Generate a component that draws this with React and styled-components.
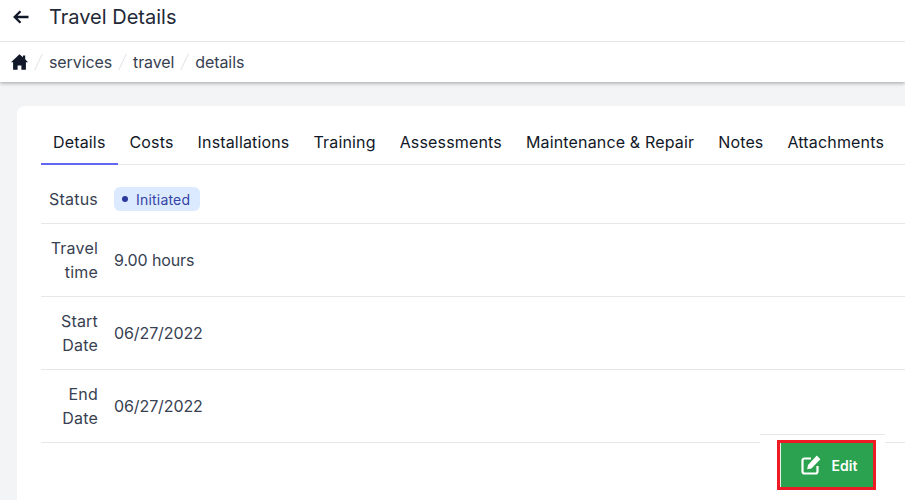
import React from "react";
import styled, { createGlobalStyle } from "styled-components";

const tabs = ["Details", "Costs", "Installations", "Training", "Assessments", "Maintenance & Repair", "Notes", "Attachments"];

const rows = [
  { label: "Travel time", value: "9.00 hours" },
  { label: "Start Date", value: "06/27/2022" },
  { label: "End Date", value: "06/27/2022" },
];

const App = () => (
  <Page>
    <GlobalStyle />
    <TopBar>
      <Header>
        <BackButton>
          <svg width="16" height="14" viewBox="0 0 16 14" fill="none" stroke="#111827" strokeWidth="2.3">
            <path d="M7.5 1.2 L1.7 7 L7.5 12.8 M1.7 7 H15.5" />
          </svg>
        </BackButton>
        <Title>Travel Details</Title>
      </Header>
      <Breadcrumbs>
        <svg width="17" height="16" viewBox="0 0 17 16" fill="#111827">
          <path d="M8.5 0.2 L12 3.3 L12 1.6 L14.2 1.6 L14.2 5.3 L17 8.2 L14.9 8.2 L14.9 15.8 L10.4 15.8 L10.4 11.4 L6.6 11.4 L6.6 15.8 L2.1 15.8 L2.1 8.2 L0 8.2 Z" />
        </svg>
        {["services", "travel", "details"].map((crumb) => (
          <React.Fragment key={crumb}>
            <Slash />
            <Crumb>{crumb}</Crumb>
          </React.Fragment>
        ))}
      </Breadcrumbs>
    </TopBar>
    <Content>
      <Card>
        <TabList>
          {tabs.map((tab, i) => (
            <Tab key={tab} $active={i === 0}>
              {tab}
            </Tab>
          ))}
        </TabList>
        <Row $status>
          <Label>Status</Label>
          <Badge>
            <Dot />
            Initiated
          </Badge>
        </Row>
        {rows.map((row) => (
          <Row key={row.label}>
            <Label>{row.label}</Label>
            <Value>{row.value}</Value>
          </Row>
        ))}
      </Card>
    </Content>
    <EditPanel>
      <EditButton>
        <svg width="20" height="20" viewBox="0 0 20 20" fill="none">
          <path d="M10 3.5 H3.5 A2 2 0 0 0 1.5 5.5 V16.5 A2 2 0 0 0 3.5 18.5 H14.5 A2 2 0 0 0 16.5 16.5 V11" stroke="#fff" strokeWidth="2.2" />
          <path d="M15.8 0.6 L19.4 4.2 L10.4 13.4 L6.2 14.2 L7 10 Z" fill="#fff" />
        </svg>
        Edit
      </EditButton>
    </EditPanel>
  </Page>
);

const GlobalStyle = createGlobalStyle`
  html, body {
    margin: 0;
    height: 100%;
    overflow: hidden;
    background: #f3f4f6;
    font-family: Inter, "Liberation Sans", sans-serif;
    color: #1f2937;
  }
`;

const Page = styled.div`
  position: relative;
  width: 905px;
  height: 500px;
  overflow: hidden;
`;

const TopBar = styled.div`
  background: #fff;
  box-shadow: 0 1px 4px rgba(0, 0, 0, 0.35);
`;

const Header = styled.div`
  display: flex;
  align-items: center;
  padding: 0 0 7px 13px;
  box-sizing: border-box;
  height: 42px;
  border-bottom: 1px solid #e5e7eb;
`;

const BackButton = styled.div`
  display: flex;
  width: 36px;
`;

const Title = styled.h1`
  margin: 0;
  font-size: 20px;
  font-weight: 400;
  color: #1f2937;
`;

const Breadcrumbs = styled.div`
  display: flex;
  align-items: center;
  height: 40px;
  padding-left: 11px;
`;

const Slash = styled.span`
  width: 1px;
  height: 18px;
  margin: 0 10px;
  background: #dfe2e7;
  transform: rotate(25deg);
`;

const Crumb = styled.span`
  font-size: 16px;
  letter-spacing: -0.1px;
  color: #374151;
`;

const Content = styled.div`
  padding: 24px 0 0 17px;
`;

const Card = styled.div`
  width: 920px;
  height: 420px;
  padding-left: 24px;
  background: #fff;
  border-radius: 8px;
  box-sizing: border-box;
`;

const TabList = styled.div`
  display: flex;
  height: 58px;
  align-items: flex-end;
  border-bottom: 1px solid #e5e7eb;
`;

const Tab = styled.div`
  padding: 0 12px 10px;
  margin-bottom: -1px;
  line-height: 22px;
  font-size: 16px;
  letter-spacing: 0.16px;
  color: #111827;
  white-space: nowrap;
  border-bottom: 2px solid ${({ $active }) => ($active ? "#6366f1" : "transparent")};
`;

const Row = styled.div`
  display: flex;
  align-items: center;
  gap: 16px;
  height: ${({ $status }) => ($status ? "48px" : "72px")};
  padding-top: ${({ $status }) => ($status ? "10px" : "0")};
  border-bottom: 1px solid #e5e7eb;
`;

const Label = styled.div`
  width: 49px;
  margin-left: 8px;
  text-align: right;
  font-size: 16px;
  line-height: 24px;
  letter-spacing: 0.2px;
  color: #374151;
`;

const Value = styled.div`
  font-size: 16px;
  letter-spacing: -0.1px;
  color: #374151;
`;

const Badge = styled.span`
  display: inline-flex;
  align-items: center;
  gap: 8px;
  height: 24px;
  padding: 0 10px 0 8px;
  border-radius: 6px;
  background: #dbeafe;
  font-size: 14px;
  letter-spacing: 0.2px;
  color: #3342a5;
`;

const Dot = styled.span`
  width: 6px;
  height: 6px;
  border-radius: 50%;
  background: #2b3a9f;
`;

const EditPanel = styled.div`
  position: absolute;
  left: 760px;
  top: 434px;
  width: 125px;
  height: 66px;
  box-sizing: border-box;
  background: #fff;
  border-top: 1px solid #e5e7eb;
  padding: 5px 0 0 17px;
`;

const EditButton = styled.button`
  display: flex;
  align-items: center;
  justify-content: center;
  gap: 11px;
  width: 99px;
  height: 50px;
  box-sizing: border-box;
  padding: 0 0 0 5px;
  border: 3px solid #ed1c24;
  background: #2ba24f;
  box-shadow: inset 1px 0 0 #e6f4ea;
  color: #fff;
  font-family: inherit;
  font-size: 14px;
  font-weight: 600;
`;

export default App;
